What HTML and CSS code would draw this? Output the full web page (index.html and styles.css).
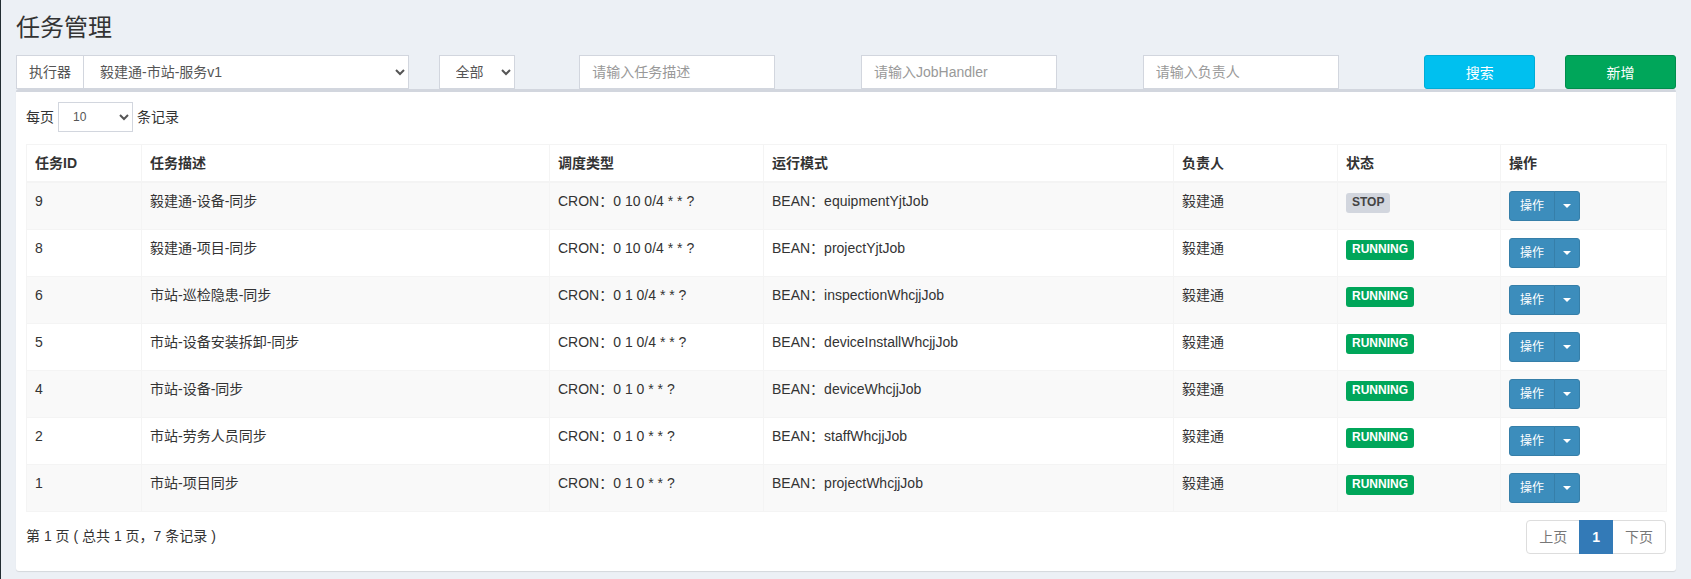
FILE: index.html
```html
<!DOCTYPE html>
<html lang="zh-CN">
<head>
<meta charset="utf-8">
<title>任务管理</title>
<link rel="stylesheet" href="styles.css">
</head>
<body>
<div class="page">
  <section class="content-header">
    <h1>任务管理</h1>
  </section>
  <section class="content">
    <div class="filters">
      <div class="col">
        <div class="input-group">
          <span class="addon">执行器</span>
          <select class="form-control sel-group"><option>毅建通-市站-服务v1</option></select>
        </div>
      </div>
      <div class="col">
        <select class="form-control sel-status"><option>全部</option></select>
      </div>
      <div class="col"><input class="form-control txt" type="text" placeholder="请输入任务描述"></div>
      <div class="col"><input class="form-control txt" type="text" placeholder="请输入JobHandler"></div>
      <div class="col"><input class="form-control txt" type="text" placeholder="请输入负责人"></div>
      <div class="col"><button class="btn btn-info" type="button">搜索</button></div>
      <div class="col"><button class="btn btn-success" type="button">新增</button></div>
    </div>

    <div class="box">
      <div class="box-body">
        <div class="length">
          <span>每页</span>
          <select class="form-control sel-len"><option>10</option></select>
          <span>条记录</span>
        </div>

        <table class="grid">
          <colgroup>
            <col class="c-id"><col class="c-desc"><col class="c-type"><col class="c-mode"><col class="c-author"><col class="c-status"><col class="c-op">
          </colgroup>
          <thead>
            <tr><th>任务ID</th><th>任务描述</th><th>调度类型</th><th>运行模式</th><th>负责人</th><th>状态</th><th>操作</th></tr>
          </thead>
          <tbody>
            <tr>
              <td>9</td><td>毅建通-设备-同步</td><td>CRON：0 10 0/4 * * ?</td><td>BEAN：equipmentYjtJob</td><td>毅建通</td>
              <td><span class="label label-stop">STOP</span></td>
              <td><div class="btn-group"><span class="bt-main">操作</span><span class="bt-caret"><i class="caret"></i></span></div></td>
            </tr>
            <tr>
              <td>8</td><td>毅建通-项目-同步</td><td>CRON：0 10 0/4 * * ?</td><td>BEAN：projectYjtJob</td><td>毅建通</td>
              <td><span class="label label-run">RUNNING</span></td>
              <td><div class="btn-group"><span class="bt-main">操作</span><span class="bt-caret"><i class="caret"></i></span></div></td>
            </tr>
            <tr>
              <td>6</td><td>市站-巡检隐患-同步</td><td>CRON：0 1 0/4 * * ?</td><td>BEAN：inspectionWhcjjJob</td><td>毅建通</td>
              <td><span class="label label-run">RUNNING</span></td>
              <td><div class="btn-group"><span class="bt-main">操作</span><span class="bt-caret"><i class="caret"></i></span></div></td>
            </tr>
            <tr>
              <td>5</td><td>市站-设备安装拆卸-同步</td><td>CRON：0 1 0/4 * * ?</td><td>BEAN：deviceInstallWhcjjJob</td><td>毅建通</td>
              <td><span class="label label-run">RUNNING</span></td>
              <td><div class="btn-group"><span class="bt-main">操作</span><span class="bt-caret"><i class="caret"></i></span></div></td>
            </tr>
            <tr>
              <td>4</td><td>市站-设备-同步</td><td>CRON：0 1 0 * * ?</td><td>BEAN：deviceWhcjjJob</td><td>毅建通</td>
              <td><span class="label label-run">RUNNING</span></td>
              <td><div class="btn-group"><span class="bt-main">操作</span><span class="bt-caret"><i class="caret"></i></span></div></td>
            </tr>
            <tr>
              <td>2</td><td>市站-劳务人员同步</td><td>CRON：0 1 0 * * ?</td><td>BEAN：staffWhcjjJob</td><td>毅建通</td>
              <td><span class="label label-run">RUNNING</span></td>
              <td><div class="btn-group"><span class="bt-main">操作</span><span class="bt-caret"><i class="caret"></i></span></div></td>
            </tr>
            <tr>
              <td>1</td><td>市站-项目同步</td><td>CRON：0 1 0 * * ?</td><td>BEAN：projectWhcjjJob</td><td>毅建通</td>
              <td><span class="label label-run">RUNNING</span></td>
              <td><div class="btn-group"><span class="bt-main">操作</span><span class="bt-caret"><i class="caret"></i></span></div></td>
            </tr>
          </tbody>
        </table>

        <div class="footer">
          <div class="info">第 1 页 ( 总共 1 页，7 条记录 )</div>
          <ul class="pagination">
            <li class="pg disabled">上页</li>
            <li class="pg active">1</li>
            <li class="pg disabled">下页</li>
          </ul>
        </div>
      </div>
    </div>
  </section>
</div>
</body>
</html>
```

FILE: styles.css
```css
* { box-sizing: border-box; }

html, body {
  margin: 0;
  padding: 0;
  background: #ecf0f5;
}

body {
  font-family: "Liberation Sans", "Noto Sans CJK SC", Arial, sans-serif;
  font-size: 14px;
  line-height: 20px;
  color: #333;
}

.page {
  min-height: 579px;
  border-left: 1px solid #222d32;
  background: #ecf0f5;
}

.content-header {
  padding: 15px 15px 0 15px;
}

.content-header h1 {
  margin: 0;
  font-size: 24px;
  line-height: 26px;
  font-weight: 400;
  color: #333;
}

.content {
  padding: 14px 15px 15px 15px;
}

/* ---------- filter row ---------- */
.filters {
  display: grid;
  grid-template-columns: 3fr 1fr 2fr 2fr 2fr 1fr 1fr;
  margin: 0 -15px;
}

.col {
  padding: 0 15px;
  min-width: 0;
}

.input-group {
  display: flex;
  height: 34px;
}

.addon {
  display: flex;
  align-items: center;
  padding: 0 12px;
  height: 34px;
  border: 1px solid #d2d6de;
  border-right: 0;
  background: #fff;
  color: #555;
  font-size: 14px;
  white-space: nowrap;
}

.form-control {
  height: 34px;
  border: 1px solid #d2d6de;
  border-radius: 0;
  background-color: #fff;
  color: #555;
  font-family: "Liberation Sans", "Noto Sans CJK SC", Arial, sans-serif;
  font-size: 14px;
  padding: 6px 12px;
  outline: none;
}

.sel-group {
  flex: 1;
  min-width: 0;
}

.sel-status {
  width: 76px;
}

.txt {
  width: 196px;
}

.txt::placeholder {
  color: #999;
}

.btn {
  display: block;
  width: 100%;
  height: 34px;
  border-radius: 3px;
  border: 1px solid transparent;
  color: #fff;
  font-family: "Liberation Sans", "Noto Sans CJK SC", Arial, sans-serif;
  font-size: 14px;
  padding: 6px 12px;
}

.btn-info {
  background: #00c0ef;
  border-color: #00acd6;
}

.btn-success {
  background: #00a65a;
  border-color: #008d4c;
}

/* ---------- box ---------- */
.box {
  background: #fff;
  border-top: 3px solid #d2d6de;
  border-radius: 3px;
  box-shadow: 0 1px 1px rgba(0, 0, 0, 0.1);
  margin-bottom: 20px;
}

.box-body {
  padding: 10px 10px 17px 10px;
}

.length {
  display: flex;
  align-items: center;
  height: 30px;
  gap: 4px;
  font-size: 14px;
  color: #333;
}

.sel-len {
  width: 75px;
  height: 30px;
  padding: 5px 10px;
  font-size: 12px;
  line-height: 1.5;
}

/* ---------- table ---------- */
.grid {
  width: 1640px;
  table-layout: fixed;
  border-collapse: collapse;
  border: 1px solid #f4f4f4;
  margin-top: 12px;
  margin-bottom: 6px;
}

.c-id { width: 115px; }
.c-desc { width: 408px; }
.c-type { width: 214px; }
.c-mode { width: 410px; }
.c-author { width: 164px; }
.c-status { width: 163px; }
.c-op { width: 166px; }

.grid th,
.grid td {
  border: 1px solid #f4f4f4;
  padding: 8px;
  text-align: left;
  vertical-align: top;
  line-height: 20px;
  white-space: nowrap;
  overflow: hidden;
}

.grid th {
  font-weight: 700;
  border-bottom: 2px solid #f4f4f4;
  background: #fff;
}

.grid tbody tr:nth-child(odd) td {
  background: #f9f9f9;
}

.grid tbody tr:nth-child(even) td {
  background: #fff;
}

.label {
  display: inline-block;
  vertical-align: top;
  margin-top: 2px;
  font-size: 12px;
  line-height: 12px;
  font-weight: 700;
  padding: 3px 6px 5px 6px;
  border-radius: 3px;
  white-space: nowrap;
}

.label-run {
  background: #00a65a;
  color: #fff;
}

.label-stop {
  background: #d2d6de;
  color: #444;
}

.btn-group {
  display: inline-flex;
  vertical-align: top;
  height: 30px;
}

.bt-main,
.bt-caret {
  display: flex;
  align-items: center;
  justify-content: center;
  height: 30px;
  background: #3c8dbc;
  border: 1px solid #367fa9;
  color: #fff;
  font-size: 12px;
  line-height: 18px;
}

.bt-main {
  padding: 5px 10px;
  border-radius: 3px 0 0 3px;
}

.bt-caret {
  padding: 5px 8px;
  margin-left: -1px;
  border-radius: 0 3px 3px 0;
}

.caret {
  display: block;
  width: 0;
  height: 0;
  border-top: 4px solid #fff;
  border-left: 4px solid transparent;
  border-right: 4px solid transparent;
}

/* ---------- footer ---------- */
.footer {
  display: flex;
  justify-content: space-between;
  align-items: flex-start;
}

.info {
  padding-top: 8px;
  line-height: 20px;
  color: #333;
}

.pagination {
  display: flex;
  list-style: none;
  margin: 2px 0 0 0;
  padding: 0;
}

.pg {
  height: 34px;
  padding: 6px 12px;
  line-height: 20px;
  border: 1px solid #ddd;
  margin-left: -1px;
  background: #fff;
  color: #777;
  font-size: 14px;
}

.pg:first-child {
  margin-left: 0;
  border-radius: 4px 0 0 4px;
}

.pg:last-child {
  border-radius: 0 4px 4px 0;
}

.pg.active {
  background: #337ab7;
  border-color: #337ab7;
  color: #fff;
  font-weight: 700;
  position: relative;
  z-index: 1;
}
```
